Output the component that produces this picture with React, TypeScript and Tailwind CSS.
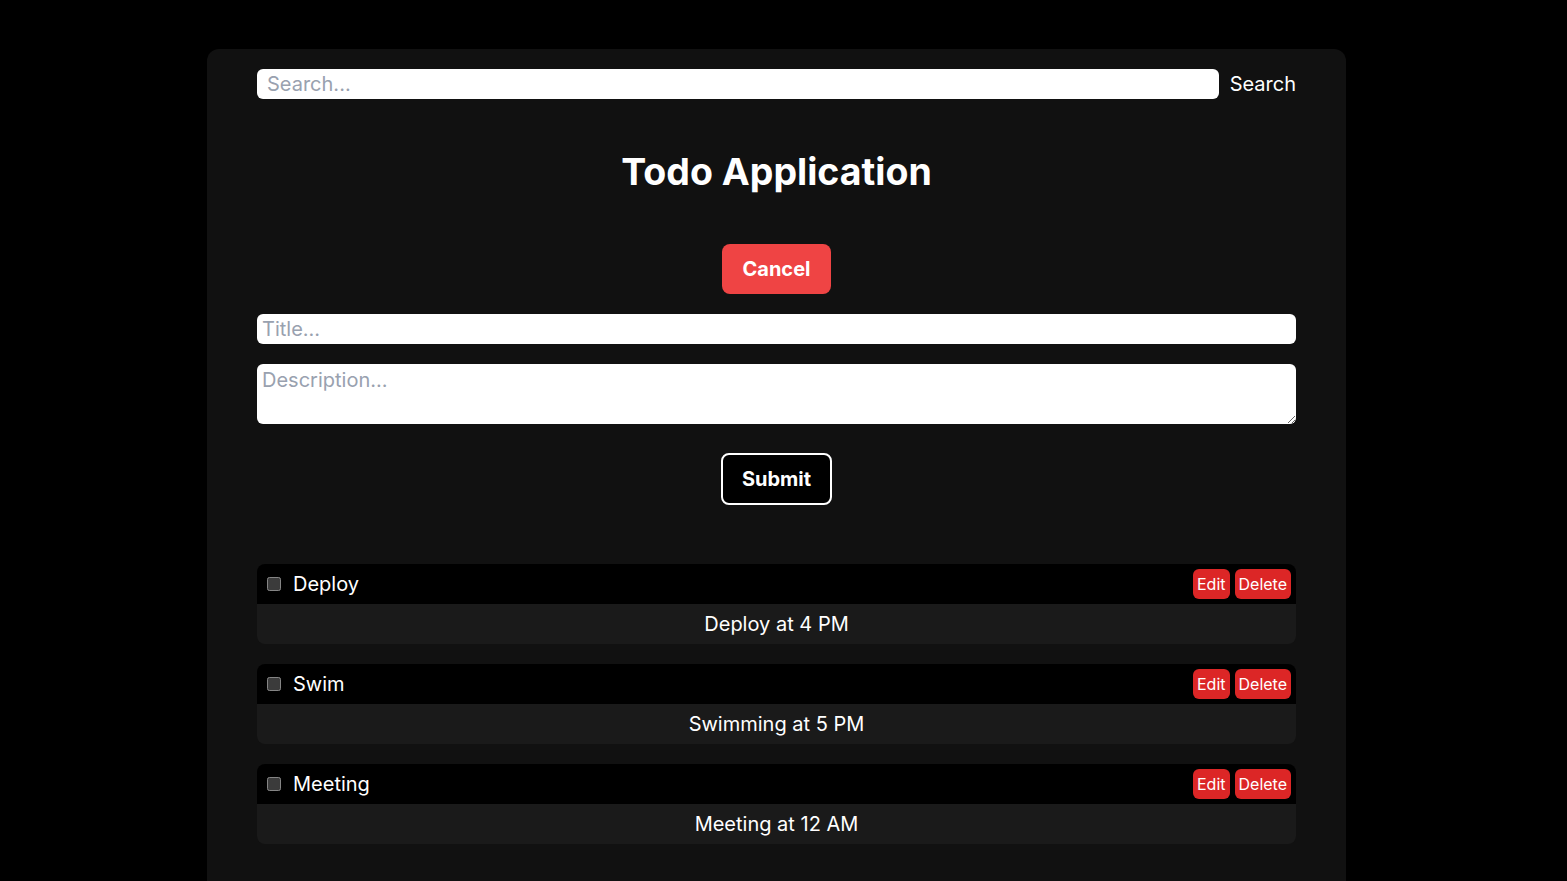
import { useState } from 'react';

interface Todo {
  id: number;
  title: string;
  description: string;
  done: boolean;
}

const initialTodos: Todo[] = [
  { id: 1, title: 'Deploy', description: 'Deploy at 4 PM', done: false },
  { id: 2, title: 'Swim', description: 'Swimming at 5 PM', done: false },
  { id: 3, title: 'Meeting', description: 'Meeting at 12 AM', done: false },
];

function TodoItem({ todo, onToggle }: { todo: Todo; onToggle: (id: number) => void }) {
  return (
    <div className="rounded-lg overflow-hidden">
      <div className="flex items-center h-10 bg-black pl-[10px] pr-[5px]">
        <input
          type="checkbox"
          checked={todo.done}
          onChange={() => onToggle(todo.id)}
          className="w-[14px] h-[14px] [color-scheme:dark]"
        />
        <span className="ml-[12px] text-xl text-white">{todo.title}</span>
        <div className="ml-auto flex gap-[5px]">
          <button className="h-[30px] px-1 rounded-md bg-[#dc2626] text-white text-base">Edit</button>
          <button className="h-[30px] px-1 rounded-md bg-[#dc2626] text-white text-base">Delete</button>
        </div>
      </div>
      <div className="h-10 flex items-center justify-center bg-[#1a1a1a] text-xl text-white">
        {todo.description}
      </div>
    </div>
  );
}

export default function App() {
  const [todos, setTodos] = useState<Todo[]>(initialTodos);
  const [search, setSearch] = useState('');
  const [title, setTitle] = useState('');
  const [description, setDescription] = useState('');

  const toggle = (id: number) => {
    setTodos((prev) => prev.map((t) => (t.id === id ? { ...t, done: !t.done } : t)));
  };

  return (
    <div className="min-h-screen bg-black pt-[49px] font-['Inter',sans-serif]">
      <div className="ml-[207px] w-[1139px] min-h-[832px] rounded-t-xl bg-[#111111] px-[50px] pt-[20px] pb-10">
        <div className="flex items-center gap-[11px]">
          <input
            value={search}
            onChange={(e) => setSearch(e.target.value)}
            placeholder="Search..."
            className="flex-1 h-[30px] rounded-md bg-white px-[10px] text-xl text-black placeholder:text-gray-400 outline-none"
          />
          <span className="text-xl text-white">Search</span>
        </div>

        <h1 className="mt-[51px] text-center text-[37.5px] leading-[44px] font-bold text-white">Todo Application</h1>

        <div className="mt-[50px] flex justify-center">
          <button className="w-[109px] h-[50px] rounded-lg bg-[#ef4444] text-xl font-bold text-white">Cancel</button>
        </div>

        <input
          value={title}
          onChange={(e) => setTitle(e.target.value)}
          placeholder="Title..."
          className="mt-[20px] block w-full h-[30px] rounded-md bg-white px-[5px] text-xl text-black placeholder:text-gray-400 outline-none"
        />
        <textarea
          value={description}
          onChange={(e) => setDescription(e.target.value)}
          placeholder="Description..."
          className="mt-[20px] block w-full h-[60px] rounded-md bg-white px-[5px] py-[2px] text-xl leading-7 text-black placeholder:text-gray-400 outline-none"
        />

        <div className="mt-[29px] flex justify-center">
          <button className="w-[111px] h-[52px] rounded-lg border-2 border-white bg-black text-xl font-bold text-white">
            Submit
          </button>
        </div>

        <div className="mt-[59px] flex flex-col gap-5">
          {todos.map((todo) => (
            <TodoItem key={todo.id} todo={todo} onToggle={toggle} />
          ))}
        </div>
      </div>
    </div>
  );
}
